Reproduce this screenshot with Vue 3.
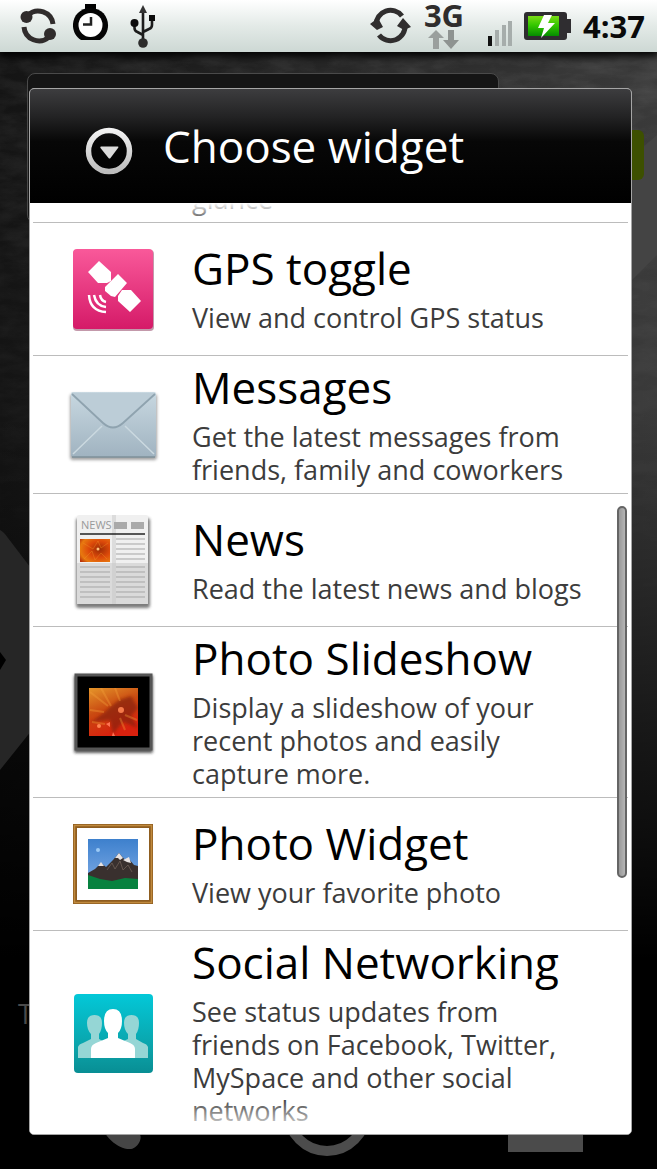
<script setup>
import { ref } from 'vue'

const selected = ref('')
const time = ref('4:37')

const widgets = [
  { id: 'gps', name: 'GPS toggle', text: ['View and control GPS status'] },
  { id: 'messages', name: 'Messages', text: ['Get the latest messages from', 'friends, family and coworkers'] },
  { id: 'news', name: 'News', text: ['Read the latest news and blogs'] },
  { id: 'slideshow', name: 'Photo Slideshow', text: ['Display a slideshow of your', 'recent photos and easily', 'capture more.'] },
  { id: 'photo', name: 'Photo Widget', text: ['View your favorite photo'] },
  { id: 'social', name: 'Social Networking', text: ['See status updates from', 'friends on Facebook, Twitter,', 'MySpace and other social', 'networks'] }
]

const newsLines = [33, 38, 43, 48, 53]
const newsLowerLines = [61, 66, 71, 76, 81, 86, 91]
</script>

<template>
  <div class="screen">
    <!-- dimmed home screen -->
    <div class="wallpaper">
      <svg class="texture" width="100%" height="100%" aria-hidden="true">
        <filter id="grain">
          <feTurbulence type="fractalNoise" baseFrequency="0.03 0.08" numOctaves="5" seed="4" />
          <feColorMatrix values="0 0 0 0 1  0 0 0 0 1  0 0 0 0 1  0.5 0 0 0 -0.14" />
        </filter>
        <rect width="100%" height="620" filter="url(#grain)" opacity="0.3" />
      </svg>
      <svg class="leaf-right" viewBox="0 0 60 150" aria-hidden="true">
        <path d="M60 0L30 26V150L60 120Z" fill="#444" />
      </svg>
      <svg class="leaf-left" viewBox="0 0 40 250" aria-hidden="true">
        <path d="M0 0Q4 2 8 8L40 50V190L0 240Z" fill="#262626" />
        <path d="M0 122l6 8-6 10z" fill="#000" />
      </svg>
      <div class="home-panel"></div>
      <div class="green-tab"></div>
      <span class="home-label">T</span>
      <svg class="dock" viewBox="0 0 657 70" aria-hidden="true">
        <path d="M98 20C104 38 118 51 131 50C139 49 144 36 138 34L122 26L112 20Z" fill="#454545" />
        <circle cx="327" cy="13" r="39" fill="none" stroke="#4c4c4c" stroke-width="10" />
        <path d="M508 20h75v33h-75z" fill="#4b4b4b" />
      </svg>
    </div>

    <header class="status-bar">
      <svg width="37" height="52" viewBox="20 0 37 52" aria-hidden="true">
        <g fill="none" stroke="#302c2c" stroke-width="5">
          <path d="M28 15A15 15 0 0 1 53 24" />
          <path d="M24 27A15 15 0 0 0 49 37" />
        </g>
        <circle cx="26.500" cy="17" r="6" fill="#302c2c" />
        <circle cx="50" cy="34" r="6" fill="#302c2c" />
      </svg>
      <svg width="37" height="52" viewBox="73 0 37 52" aria-hidden="true">
        <path d="M85 4h11v5h-3v3h-5V9h-3z" fill="#000" />
        <path d="M81 40C67 31 72 8 90.500 8S114 31 100 40Z" fill="#050505" />
        <circle cx="90.500" cy="25" r="12" fill="#fff" />
        <path d="M91 17v7.500h-8" fill="none" stroke="#222" stroke-width="2.500" />
      </svg>
      <svg width="37" height="52" viewBox="126 0 37 52" aria-hidden="true">
        <path d="M143 10v31M134.500 24v4q0 3 3 4l5.500 3M152 18v7q0 3-3 4l-6 3" fill="none" stroke="#1c1c1c" stroke-width="2.600" />
        <path d="M143 5l4 8h-8z" fill="#333" />
        <circle cx="134.500" cy="23" r="4" fill="#0c0c0c" />
        <path d="M149 15h6v6h-6z" fill="#0c0c0c" />
        <circle cx="143" cy="43" r="4.800" fill="#2c2c2c" />
      </svg>

      <div class="status-right">
        <svg width="43" height="52" viewBox="370 0 43 52" aria-hidden="true">
          <g fill="none" stroke="#302e2e" stroke-width="5">
            <path d="M376 25A14.500 14.500 0 0 1 402 16" />
            <path d="M405 25A14.500 14.500 0 0 1 379 35" />
          </g>
          <path d="M370 24l8-6 5 9-6 3zM411 27l-8-9-6 8 7 4z" fill="#302e2e" />
        </svg>
        <div class="network">
          <span>3G</span>
          <svg width="38" height="19" viewBox="0 0 38 19" aria-hidden="true">
            <path d="M11 0l8 8h-5v11H8V8H3z" fill="#9a9f9d" />
            <path d="M23 0v10h-5l8 9 8-9h-5V0z" fill="#8e9391" />
          </svg>
        </div>
        <svg width="37" height="52" viewBox="476 0 37 52" aria-hidden="true">
          <path d="M489 36h4v10h-4z" fill="#111" />
          <path d="M496 30h4v16h-4zM503 25h4v21h-4zM509 21h4v25h-4z" fill="#a6adab" />
        </svg>
        <svg width="47" height="52" viewBox="524 0 47 52" aria-hidden="true">
          <defs>
            <linearGradient id="charge" x1="0" y1="0" x2="0" y2="1">
              <stop offset="0" stop-color="#7bdc16" />
              <stop offset=".45" stop-color="#35c800" />
              <stop offset="1" stop-color="#058c00" />
            </linearGradient>
          </defs>
          <rect x="524" y="12" width="43" height="28" rx="3" fill="#2f2d30" />
          <path d="M566 19h5v14h-5z" fill="#2f2d30" />
          <path d="M528 16h31v20h-31z" fill="url(#charge)" />
          <path d="M544 15h8l-4 8h7L541 38l3-10h-6z" fill="#fff" />
        </svg>
        <span class="time">{{ time }}</span>
      </div>
    </header>

    <main class="dialog">
      <div class="dialog-header">
        <svg width="48" height="48" viewBox="0 0 48 48" aria-hidden="true">
          <defs>
            <linearGradient id="ring" x1="0" y1="0" x2="0" y2="1">
              <stop offset="0" stop-color="#f2f2f2" />
              <stop offset="1" stop-color="#bdbdbd" />
            </linearGradient>
          </defs>
          <circle cx="24" cy="24" r="20.500" fill="none" stroke="url(#ring)" stroke-width="5.500" />
          <path d="M16 19.500h17q1 0 0 1.500l-7.500 10q-1 1-2 0L15.500 21q-.8-1.500.5-1.500z" fill="#dcdcdc" />
        </svg>
        <h1>Choose widget</h1>
      </div>

      <div class="list">
        <div class="row row-above">
          <span class="info"><span class="line">glance</span></span>
        </div>
        <button v-for="widget in widgets" :key="widget.id" class="row" type="button" @click="selected = widget.id">
          <svg v-if="widget.id === 'gps'" class="icon" viewBox="0 0 96 96" aria-hidden="true">
            <defs>
              <linearGradient id="pink" x1="0" y1="0" x2="0" y2="1">
                <stop offset="0" stop-color="#f9599a" />
                <stop offset="1" stop-color="#d51a68" />
              </linearGradient>
            </defs>
            <rect x="8" y="9" width="81" height="81" rx="4" fill="#9b5573" opacity=".6" />
            <rect x="8" y="8" width="80" height="80" rx="4" fill="url(#pink)" />
            <path d="M34 20L46 31V40L42 42H33L23 31ZM53 33L62 42L50 56L46 55L40 50V46ZM57 49H66L76 60L65 71L53 60V55Z" fill="#fff" />
            <g fill="none" stroke="#fff" stroke-width="2.500">
              <path d="M24 54Q25 70 41 71M29 54Q31 65 41 66M35 54Q36 60 41 61" />
            </g>
          </svg>

          <svg v-else-if="widget.id === 'messages'" class="icon" viewBox="0 0 96 96" aria-hidden="true">
            <defs>
              <linearGradient id="paper" x1="0" y1="0" x2="0" y2="1">
                <stop offset="0" stop-color="#c8d8e1" />
                <stop offset="1" stop-color="#a0b3c0" />
              </linearGradient>
              <filter id="soft"><feGaussianBlur stdDeviation="1.500" /></filter>
            </defs>
            <rect x="5" y="17" width="87" height="66" rx="3" fill="#666" opacity=".6" filter="url(#soft)" />
            <rect x="6" y="15" width="85" height="65" rx="2" fill="url(#paper)" />
            <path d="M8 77L37 49M89 77L60 49" stroke="#cbd9e0" stroke-width="1.500" />
            <path d="M7 16L38 45Q48 54 58 45L90 16Z" fill="#bccdd7" />
            <path d="M7 17L38 46Q48 55 58 46L90 17" fill="none" stroke="#8fa3af" stroke-width="1.800" />
            <path d="M7 80h83" stroke="#7e909a" stroke-width="1.500" />
          </svg>

          <svg v-else-if="widget.id === 'news'" class="icon icon-tall" viewBox="0 0 96 108" aria-hidden="true">
            <defs>
              <radialGradient id="flower" cx=".65" cy=".45" r=".8">
                <stop offset="0" stop-color="#9c2c05" />
                <stop offset=".45" stop-color="#dd4a0a" />
                <stop offset=".8" stop-color="#e8790f" />
                <stop offset="1" stop-color="#b8330a" />
              </radialGradient>
            </defs>
            <rect x="11" y="12" width="74" height="90" rx="3" fill="#444" opacity=".7" filter="url(#soft)" />
            <rect x="12" y="9" width="71" height="89" rx="2" fill="#f0f0f0" />
            <path d="M12 57h71v41H12z" fill="#dadada" />
            <path d="M47 9h4v89h-4z" fill="#c8c8c8" opacity=".5" />
            <text x="16" y="23" class="news-text">NEWS</text>
            <path d="M49 16h13v7H49zM66 16h13v7H66z" fill="#aaa" />
            <path d="M15 28h65" stroke="#222" stroke-width="1.500" />
            <path d="M15 33h30v23H15z" fill="url(#flower)" />
            <path d="M18 37l10 6 5-8 3 7 7-5M19 53l8-8 3 9 6-7 6 6" fill="none" stroke="#f29a28" opacity=".35" />
            <circle cx="33" cy="43" r="1.500" fill="#ffc27b" />
            <g stroke="#a5a5a5">
              <path v-for="y in newsLines" :key="y" :d="`M51 ${y}h29`" />
              <path v-for="y in newsLowerLines" :key="y" :d="`M15 ${y}h30M51 ${y}h29`" />
            </g>
          </svg>

          <svg v-else-if="widget.id === 'slideshow'" class="icon" viewBox="0 0 96 96" aria-hidden="true">
            <defs>
              <linearGradient id="fire" x1="0" y1="0" x2=".4" y2="1">
                <stop offset="0" stop-color="#e5962a" />
                <stop offset=".5" stop-color="#c94911" />
                <stop offset="1" stop-color="#d8210e" />
              </linearGradient>
              <clipPath id="fireClip"><path d="M24 24h49v48H24z" /></clipPath>
            </defs>
            <rect x="9" y="11" width="79" height="78" rx="2" fill="#222" opacity=".75" filter="url(#soft)" />
            <rect x="11" y="11" width="75" height="74" fill="#000" stroke="#555" stroke-width="3" />
            <path d="M24 24h49v48H24z" fill="url(#fire)" />
            <g clip-path="url(#fireClip)">
              <path d="M44 44L54 36L66 32L73 44L66 52L73 64L58 58L48 70L45 56L26 58L40 48Z" fill="#7c1b08" opacity=".6" filter="url(#soft)" />
              <path d="M25 28l18 14M36 24l10 18M25 46l14 2M50 24l5 13M27 58l13 2M60 66l-5-12M72 56l-12-5" stroke="#f5a13a" stroke-width="2" opacity=".35" />
              <circle cx="56" cy="46" r="3" fill="#f57a4a" />
              <circle cx="34" cy="62" r="2" fill="#ff8450" />
              <path d="M41 60l4-2v5zM48 68l2 4h-3z" fill="#ff7454" />
            </g>
          </svg>

          <svg v-else-if="widget.id === 'photo'" class="icon" viewBox="0 0 96 96" aria-hidden="true">
            <defs>
              <linearGradient id="sky" x1="0" y1="0" x2="0" y2="1">
                <stop offset="0" stop-color="#3d80cd" />
                <stop offset="1" stop-color="#86b0e8" />
              </linearGradient>
            </defs>
            <rect x="10" y="10" width="76" height="76" fill="#fff" stroke="#8f5d1f" stroke-width="4" />
            <rect x="9.500" y="9.500" width="77" height="77" fill="none" stroke="#c08a3e" stroke-width="1.500" />
            <path d="M23 23h50v50H23z" fill="url(#sky)" />
            <circle cx="33" cy="34" r="2" fill="#9ccaf5" />
            <path d="M23 57L30 53L36 47L41 51L48 44L54 37L60 44L64 43L69 49L73 50V66H23Z" fill="#39302e" />
            <path d="M50 42l4-5 4 5-3 2-2-2zM33 50l3-4 3 4zM58 44l6-3 2 6-4-1z" fill="#e8e3e3" />
            <path d="M42 54l5-7 3 6 5-8 3 9 5-5 4 7" fill="none" stroke="#75655c" opacity=".7" />
            <path d="M23 59L35 63L47 65L60 62L73 63V73H23Z" fill="#07823f" />
          </svg>

          <svg v-else class="icon" viewBox="0 0 96 96" aria-hidden="true">
            <defs>
              <linearGradient id="teal" x1="0" y1="0" x2="0" y2="1">
                <stop offset="0" stop-color="#03c8d8" />
                <stop offset=".75" stop-color="#0b9fa5" />
                <stop offset="1" stop-color="#088e94" />
              </linearGradient>
            </defs>
            <rect x="9" y="9" width="79" height="79" rx="4" fill="url(#teal)" />
            <g fill="#95d6d5">
              <path d="M13 73V62Q14 59 18 58L26 54V49Q22 45 22 38Q22 30 29.500 30T37 38Q37 45 34 49V54L44 59V73Z" />
              <path d="M83 73V62Q82 59 78 58L71 54V49Q74 45 74 38Q74 30 66.500 30T59 38Q59 45 63 49V54L52 59V73Z" />
            </g>
            <path d="M26 73V64Q26 60 31 58L43 53V48Q39 44 39 36Q39 24 48 24T57 36Q57 44 53 48V53L65 58Q70 60 70 64V73Z" fill="#fff" />
          </svg>

          <span class="info">
            <span class="name">{{ widget.name }}</span>
            <span v-for="line in widget.text" :key="line" class="line">{{ line }}</span>
          </span>
        </button>
        <div class="scroll-thumb"></div>
      </div>
    </main>
  </div>
</template>

<style>
body {
  margin: 0;
  background: #000;
}
</style>

<style scoped>
.screen {
  position: relative;
  display: flex;
  flex-direction: column;
  height: 100vh;
  overflow: hidden;
  font-family: "Open Sans", "Noto Sans", sans-serif;
}

.wallpaper {
  position: absolute;
  inset: 0;
  background:
    linear-gradient(180deg, transparent 35%, #000 82%),
    linear-gradient(90deg, #141414 0%, #2a2a2a 60%, #3a3a3a 100%);
}

.texture {
  position: absolute;
  inset: 0;
  mask-image: linear-gradient(#000, transparent 55%);
}

.leaf-right {
  position: absolute;
  top: 135px;
  right: 0;
  width: 60px;
}

.leaf-left {
  position: absolute;
  top: 530px;
  left: 0;
  width: 40px;
}

.home-panel {
  position: absolute;
  top: 73px;
  left: 27px;
  right: 158px;
  height: 150px;
  box-sizing: border-box;
  border: 1px solid #4a4a4a;
  border-radius: 8px;
  background: #151515;
}

.green-tab {
  position: absolute;
  top: 130px;
  right: 13px;
  width: 30px;
  height: 50px;
  border-radius: 6px;
  background: #3d5000;
}

.home-label {
  position: absolute;
  top: 995px;
  left: 18px;
  color: #4a4a4a;
  font-size: 27px;
}

.dock {
  position: absolute;
  bottom: 0;
  left: 0;
  width: 100%;
}

.status-bar {
  position: relative;
  display: flex;
  align-items: center;
  gap: 16px;
  height: 52px;
  flex-shrink: 0;
  padding: 0 12px 0 20px;
  background: linear-gradient(#fff, #e3eae7 50%, #cdd8d4);
  box-shadow: 0 2px 8px 2px #000;
}

.status-right {
  display: flex;
  align-items: center;
  gap: 12px;
  margin-left: auto;
}

.network {
  display: flex;
  flex-direction: column;
  align-items: center;
  align-self: flex-start;
  width: 38px;
  color: #2f2d2d;
  font-size: 31px;
  font-weight: 700;
  line-height: 30px;
}

.time {
  color: #0a0a0a;
  font-size: 31px;
  font-weight: 700;
  line-height: 52px;
}

.dialog {
  position: relative;
  display: flex;
  flex: 1;
  flex-direction: column;
  min-height: 0;
  margin: 36px 25px 34px 29px;
  border: 1px solid #a5a5a5;
  border-radius: 5px;
  background: #fff;
  overflow: hidden;
}

.dialog-header {
  display: flex;
  align-items: center;
  gap: 30px;
  height: 114px;
  flex-shrink: 0;
  padding: 0 55px;
  background: linear-gradient(#3d3d3f, #232324 24%, #070707 46%, #000);
}

.dialog-header svg {
  margin-top: 10px;
}

h1 {
  margin: 0;
  color: #fff;
  font-size: 44px;
  font-weight: 400;
  line-height: 56px;
}

.list {
  position: relative;
  display: flex;
  flex: 1;
  flex-direction: column;
  justify-content: flex-end;
  min-height: 0;
  padding: 0 3px;
  overflow: hidden;
}

/* soft edges where the list scrolls away */
.list::before,
.list::after {
  content: "";
  position: absolute;
  left: 0;
  right: 0;
  z-index: 1;
  height: 18px;
}

.list::before {
  top: 0;
  background: linear-gradient(#fff, rgba(255, 255, 255, 0));
}

.list::after {
  bottom: 0;
  height: 36px;
  background: linear-gradient(rgba(255, 255, 255, 0), #fff);
}

.row {
  display: flex;
  align-items: center;
  flex-shrink: 0;
  gap: 31px;
  box-sizing: border-box;
  width: 100%;
  min-height: 133px;
  padding: 3px 0 7px 32px;
  border: 0;
  border-bottom: 1px solid #bcbcbc;
  background: none;
  font-family: inherit;
  text-align: left;
  cursor: pointer;
}

.row:nth-last-child(2) {
  border-bottom: 0;
}

.row-above {
  align-items: flex-end;
  padding-left: 159px;
}

.icon {
  flex-shrink: 0;
  width: 96px;
  height: 96px;
  margin-top: 4px;
}

.icon-tall {
  height: 108px;
}

.news-text {
  fill: #999;
  font-size: 11px;
}

.info {
  display: flex;
  flex-direction: column;
}

.name {
  margin-bottom: 5px;
  color: #000;
  font-size: 44px;
  line-height: 56px;
}

.line {
  color: #3c3c3c;
  font-size: 27px;
  line-height: 33px;
  white-space: nowrap;
}

.scroll-thumb {
  position: absolute;
  top: 32.5%;
  right: 4px;
  width: 10px;
  height: 40%;
  box-sizing: border-box;
  border: 2px solid #656565;
  border-radius: 5px;
  background: linear-gradient(90deg, #999, #b5b5b5);
}
</style>
